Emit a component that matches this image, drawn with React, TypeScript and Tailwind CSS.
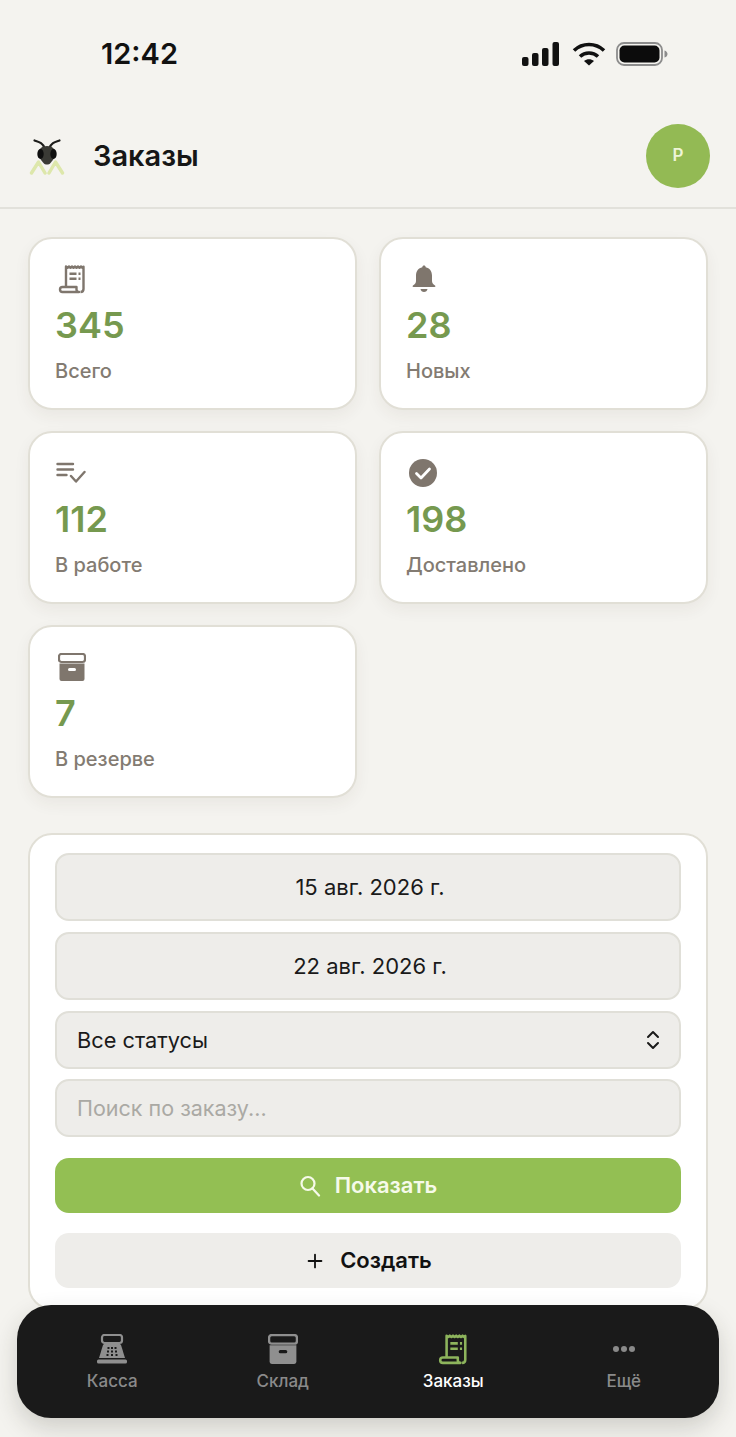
import type { ReactNode } from "react";
import { Plus } from "lucide-react";

function ReceiptIcon({ className }: { className?: string }) {
  return (
    <svg className={className} viewBox="0 0 28 30" fill="none">
      <path d="M8 23V2.500l1.500 1.200L11 2.500l1.500 1.200L14 2.500l1.500 1.200L17 2.500l1.500 1.200L20 2.500l1.500 1.200L23 2.500l1.500 1.200 1-1V25c0 1.600-1 3-3 3" stroke="currentColor" strokeWidth="2.400" strokeLinejoin="round" />
      <path d="M4.500 23H18.500V25.500C18.500 27 19.500 28 21 28H4.500C2.800 28 2 27 2 25.500 2 24 3 23 4.500 23Z" stroke="currentColor" strokeWidth="2.400" strokeLinejoin="round" />
      <path d="M11.500 8.500H18.500V11H11.500ZM11.500 13.500H18.500V16H11.500ZM20.500 8.500H22.500V11H20.500ZM20.500 13.500H22.500V16H20.500Z" fill="currentColor" />
    </svg>
  );
}

function BellIcon({ className }: { className?: string }) {
  return (
    <svg className={className} viewBox="0 0 24 28" fill="currentColor">
      <path d="M12 .5c1 0 1.600.7 1.700 1.700C17.600 3 20 6.300 20 10.500v5.500c0 2 1 3.200 3 4.500.8.600.5 1.500-.5 1.500H1.500c-1 0-1.300-.9-.5-1.500 2-1.300 3-2.500 3-4.500V10.500c0-4.200 2.400-7.500 6.300-8.300C10.400 1.200 11 .5 12 .5Z" />
      <path d="M8.500 24h7c-.3 1.800-1.700 3-3.500 3s-3.200-1.200-3.500-3Z" />
    </svg>
  );
}

function CheckCircleIcon({ className }: { className?: string }) {
  return (
    <svg className={className} viewBox="0 0 28 28">
      <circle cx="14" cy="14" r="14" fill="currentColor" />
      <path d="M7.500 14.500l4.500 4.500 8.500-9" fill="none" stroke="#fff" strokeWidth="2.800" strokeLinecap="round" strokeLinejoin="round" />
    </svg>
  );
}

function ListCheckIcon({ className }: { className?: string }) {
  return (
    <svg className={className} viewBox="0 0 30 22" fill="none" stroke="currentColor" strokeWidth="2.400" strokeLinecap="round" strokeLinejoin="round">
      <path d="M1.500 2H17M1.500 7.500H17M1.500 13H10.500" />
      <path d="M15 14l5 5.500L28.500 10" />
    </svg>
  );
}

function ArchiveIcon({ className, slot = "#fff" }: { className?: string; slot?: string }) {
  return (
    <svg className={className} viewBox="0 0 28 28">
      <rect x="1" y="1" width="26" height="8" rx="2.500" fill="none" stroke="currentColor" strokeWidth="2.200" />
      <path d="M1.500 10.500h25V26a2 2 0 0 1-2 2h-21a2 2 0 0 1-2-2Z" fill="currentColor" />
      <rect x="10" y="15" width="8" height="3" rx="1.500" fill={slot} />
    </svg>
  );
}

function RegisterIcon({ className }: { className?: string }) {
  return (
    <svg className={className} viewBox="0 0 32 30">
      <rect x="6" y="1" width="20" height="8" rx="2.500" fill="none" stroke="currentColor" strokeWidth="2.200" />
      <path d="M8 10h16l1 1 4 13H3l4-13Z" fill="currentColor" />
      <rect x="1" y="25.500" width="30" height="4" rx="1.500" fill="currentColor" />
      <g fill="#1a1a1a">
        <rect x="11.500" y="13" width="2" height="2" />
        <rect x="15" y="13" width="2" height="2" />
        <rect x="18.500" y="13" width="2" height="2" />
        <rect x="11" y="16.500" width="2" height="2" />
        <rect x="15" y="16.500" width="2" height="2" />
        <rect x="19" y="16.500" width="2" height="2" />
        <rect x="10.500" y="20" width="2" height="2" />
        <rect x="15" y="20" width="2" height="2" />
        <rect x="19.500" y="20" width="2" height="2" />
      </g>
    </svg>
  );
}

function AntLogo() {
  return (
    <svg className="h-[38px] w-[38px]" viewBox="0 0 38 38" fill="none">
      <path d="M3.500 36L10.500 25L17 36M21 36L27.500 25L34.500 36" stroke="#dde7ab" strokeWidth="3.400" strokeLinecap="round" strokeLinejoin="round" />
      <path d="M16.500 11C14.500 5.500 11 5 6.500 3.500M21.500 11C23.500 5.500 27 5 31.500 3.500" stroke="#1c1c1a" strokeWidth="2.200" strokeLinecap="round" />
      <path d="M19 9c5.500 0 8.500 3.500 8.500 7.500 0 4-3.500 7.500-5 9.500-1.500 2-5.500 2-7 0-1.500-2-5-5.500-5-9.500C10.500 12.500 13.500 9 19 9Z" fill="#3a3a35" />
      <ellipse cx="12.500" cy="17" rx="3.200" ry="5" fill="#0f0f0f" />
      <ellipse cx="25.500" cy="17" rx="3.200" ry="5" fill="#0f0f0f" />
    </svg>
  );
}

function StatCard({ icon, value, label }: { icon: ReactNode; value: string; label: string }) {
  return (
    <div className="h-[173px] rounded-[24px] border-2 border-[#e1dfd6] bg-white pl-[25px] pt-[25px] shadow-[0_6px_16px_rgba(60,55,40,0.06)]">
      <div className="flex h-[30px] items-center text-[#7f766d]">{icon}</div>
      <div className="mt-[9px] text-[36px] font-semibold leading-[44px] text-[#76994f]">{value}</div>
      <div className="mt-[10px] text-[20px] font-medium leading-[28px] text-[#837b72]">{label}</div>
    </div>
  );
}

function DateField({ children }: { children: ReactNode }) {
  return (
    <div className="flex h-[68px] items-center justify-center rounded-[14px] border-2 border-[#e0dfd8] bg-[#eeedea] pl-[4px] text-[22px] text-[#1a1a1a]">
      {children}
    </div>
  );
}

function NavItem({ icon, label, active }: { icon: ReactNode; label: string; active?: boolean }) {
  return (
    <div className={active ? "flex flex-col items-center text-[#8db45c]" : "flex flex-col items-center text-[#8f8f8f]"}>
      <div className="flex h-[32px] items-center justify-center">{icon}</div>
      <div className={active ? "mt-[5px] text-[17px] font-medium leading-[22px] text-white" : "mt-[5px] text-[17px] font-medium leading-[22px] text-[#8a8a8a]"}>{label}</div>
    </div>
  );
}

export default function App() {
  return (
    <div className="relative h-[1437px] w-[736px] overflow-hidden bg-[#f4f3ef] font-['Inter','Noto_Sans',sans-serif]">
      <div className="flex h-[108px] items-center justify-between pl-[101px] pr-[68px]">
        <span className="text-[29px] font-semibold text-[#111]">12:42</span>
        <div className="flex items-center">
          <svg className="h-[24px] w-[38px]" viewBox="0 0 38 24" fill="#111">
            <rect x="0" y="15" width="6.500" height="9" rx="2" />
            <rect x="10" y="11" width="6.500" height="13" rx="2" />
            <rect x="20" y="6" width="6.500" height="18" rx="2" />
            <rect x="30.500" y="0" width="6.500" height="24" rx="2" />
          </svg>
          <svg className="ml-[12px] h-[24px] w-[34px]" viewBox="0 0 34 24" fill="none" stroke="#111" strokeWidth="3.600">
            <path d="M2 8.500C10.500.5 23.500.5 32 8.500" />
            <path d="M8 14.500c5-4.600 13-4.600 18 0" />
            <path d="M17 23.500l-5-4.500c3-2.400 7-2.400 10 0Z" fill="#111" stroke="none" />
          </svg>
          <svg className="ml-[10px] h-[24px] w-[52px]" viewBox="0 0 52 24" fill="none">
            <rect x="1" y="1" width="45" height="22" rx="7" stroke="#8c8c8c" strokeWidth="1.800" />
            <rect x="3.500" y="3.500" width="40" height="17" rx="5" fill="#0c0c0c" />
            <path d="M48.500 8.500c2 .5 3 2 3 3.500s-1 3-3 3.500Z" fill="#8c8c8c" />
          </svg>
        </div>
      </div>

      <header className="flex h-[101px] items-center justify-between border-b-2 border-[#e2e1db] pb-[3px] pl-[28px] pr-[26px]">
        <div className="flex items-center gap-[27px]">
          <AntLogo />
          <h1 className="text-[29px] font-semibold text-[#161616]">Заказы</h1>
        </div>
        <div className="flex h-[64px] w-[64px] items-center justify-center rounded-full bg-[#93ba54] text-[17px] font-semibold text-[#eef5d8]">P</div>
      </header>

      <main className="px-[28px] pt-[28px]">
        <div className="grid grid-cols-2 gap-x-[22px] gap-y-[21px]">
          <StatCard icon={<ReceiptIcon className="ml-[3px] h-[30px] w-[28px]" />} value="345" label="Всего" />
          <StatCard icon={<BellIcon className="ml-[6px] h-[28px] w-[24px]" />} value="28" label="Новых" />
          <StatCard icon={<ListCheckIcon className="ml-[1px] h-[22px] w-[30px]" />} value="112" label="В работе" />
          <StatCard icon={<CheckCircleIcon className="ml-[3px] h-[28px] w-[28px]" />} value="198" label="Доставлено" />
          <StatCard icon={<ArchiveIcon className="ml-[3px] h-[28px] w-[28px]" />} value="7" label="В резерве" />
        </div>

        <section className="mt-[35px] flex h-[477px] flex-col rounded-[24px] border-2 border-[#e1dfd6] bg-white px-[25px] pt-[18px]">
          <DateField>15 авг. 2026 г.</DateField>
          <div className="mt-[11px]">
            <DateField>22 авг. 2026 г.</DateField>
          </div>
          <div className="mt-[11px] flex h-[58px] items-center justify-between rounded-[14px] border-2 border-[#e0dfd8] bg-[#eeedea] pl-[20px] pr-[19px] text-[21.75px] text-[#1a1a1a]">
            <span>Все статусы</span>
            <svg className="h-[20px] w-[14px]" viewBox="0 0 14 20" fill="none" stroke="#1a1a1a" strokeWidth="2" strokeLinecap="round" strokeLinejoin="round">
              <path d="M2 7L7 2L12 7" />
              <path d="M2 13L7 18L12 13" />
            </svg>
          </div>
          <div className="mt-[10px] flex h-[58px] items-center rounded-[14px] border-2 border-[#e0dfd8] bg-[#eeedea] pl-[20px] text-[21.5px] text-[#aaa9a4]">
            Поиск по заказу...
          </div>
          <div className="mt-[21px] flex h-[55px] items-center justify-center gap-[14px] rounded-[14px] bg-[#93bf53] text-[22px] font-semibold text-[#f6faea]">
            <svg className="h-[22px] w-[22px]" viewBox="0 0 22 22" fill="none" stroke="currentColor" strokeWidth="2.200" strokeLinecap="round">
              <circle cx="9" cy="8.500" r="6.500" />
              <path d="M13.500 13.500L20 20.500" />
            </svg>
            <span>Показать</span>
          </div>
          <div className="mt-[20px] flex h-[55px] items-center justify-center gap-[14px] rounded-[14px] bg-[#eeedea] text-[22px] font-semibold text-[#111]">
            <Plus className="h-[22px] w-[22px]" strokeWidth={2} />
            <span>Создать</span>
          </div>
        </section>
      </main>

      <nav className="absolute left-[17px] top-[1305px] grid h-[113px] w-[702px] grid-cols-4 rounded-[34px] bg-[#1a1a1a] px-[10px] pt-[28px] shadow-[0_10px_24px_rgba(40,40,30,0.18)]">
        <NavItem icon={<RegisterIcon className="h-[30px] w-[32px]" />} label="Касса" />
        <NavItem icon={<ArchiveIcon className="h-[30px] w-[30px]" slot="#1a1a1a" />} label="Склад" />
        <NavItem active icon={<ReceiptIcon className="h-[32px] w-[30px]" />} label="Заказы" />
        <NavItem
          icon={
            <div className="flex gap-[2px]">
              <span className="h-[6px] w-[6px] rounded-full bg-[#8a8a8a]" />
              <span className="h-[6px] w-[6px] rounded-full bg-[#8a8a8a]" />
              <span className="h-[6px] w-[6px] rounded-full bg-[#8a8a8a]" />
            </div>
          }
          label="Ещё"
        />
      </nav>
    </div>
  );
}
